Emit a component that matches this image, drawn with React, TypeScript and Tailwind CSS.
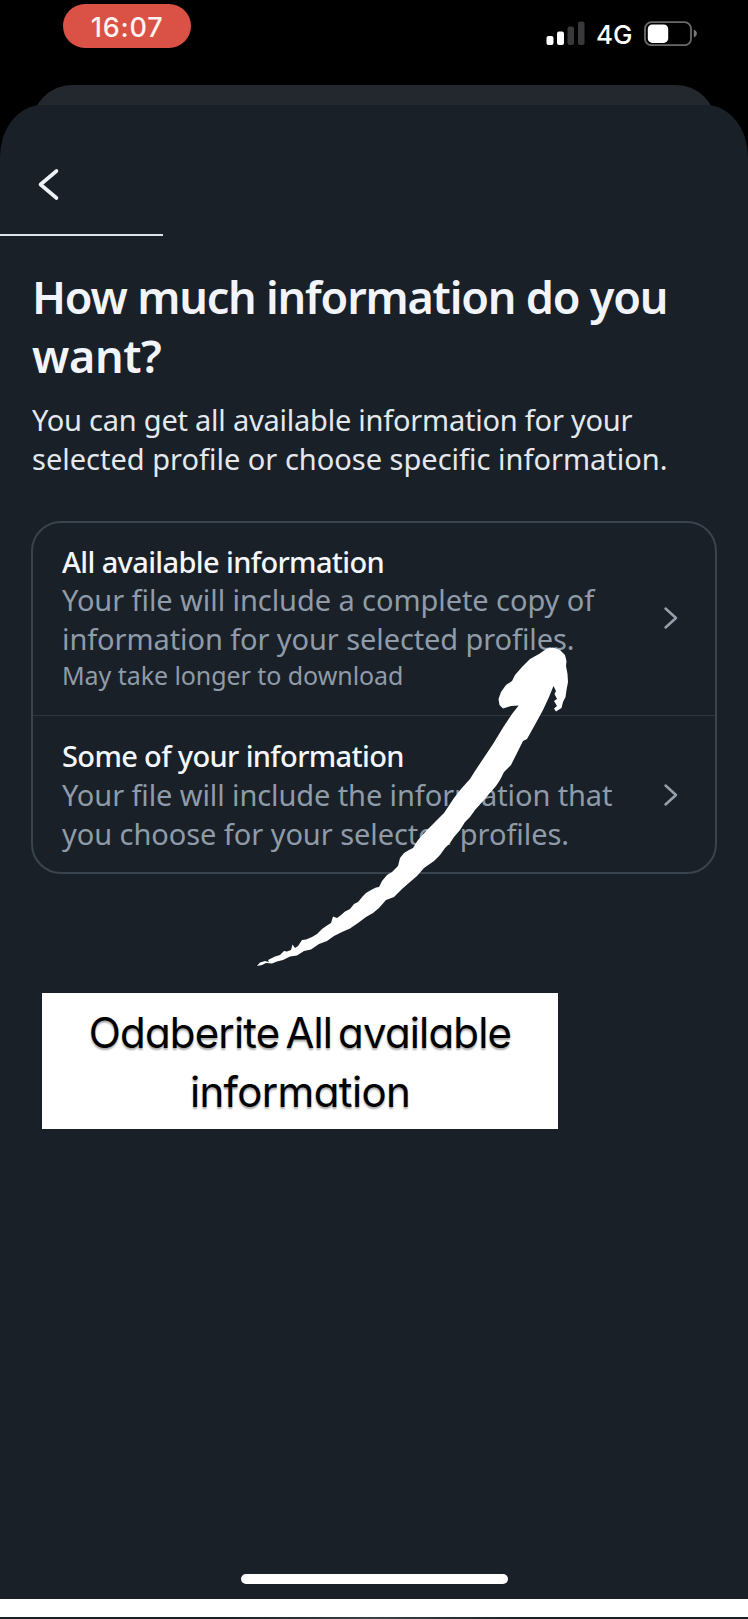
import type { ReactNode } from "react";

function StatusBar() {
  return (
    <header className="flex h-[85px] items-start justify-between bg-black pl-[63px] pr-[50px]">
      <div className="mt-[4px] h-[44px] w-[128px] rounded-full bg-[#d95245] pt-[2px] text-center font-['Inter',sans-serif] text-[27px] font-medium leading-[44px] tracking-[0.8px] text-[#fdf3f1]">
        16:07
      </div>
      <div className="mt-[21px] flex h-[25px] items-center">
        <svg width="39" height="25" viewBox="0 0 39 25">
          <rect x="0.5" y="15" width="7" height="9" rx="2" fill="#fff" />
          <rect x="11" y="10.5" width="7" height="13.5" rx="2" fill="#fff" />
          <rect x="21.5" y="5.5" width="6.5" height="18.5" rx="2" fill="#39383b" />
          <rect x="32" y="0.5" width="6.5" height="23.5" rx="2" fill="#39383b" />
        </svg>
        <span className="ml-[11px] mt-[2px] w-[48px] font-['Inter',sans-serif] text-[26px] font-medium leading-[25px] text-white">
          4G
        </span>
        <svg width="54" height="25" viewBox="0 0 54 25">
          <rect x="1" y="1.2" width="46" height="23" rx="6.5" fill="none" stroke="#6b696c" strokeWidth="1.8" />
          <rect x="3.8" y="3.5" width="20.4" height="18.4" rx="4.5" fill="#fff" />
          <path d="M49.800 8.500c2 .8 3 2.300 3 4s-1 3.200-3 4z" fill="#7a787b" />
        </svg>
      </div>
    </header>
  );
}

function Chevron() {
  return (
    <svg width="16" height="24" viewBox="0 0 16 24" className="mr-[36px] shrink-0">
      <path d="M2.500 2.500 L13 12 L2.500 21.500" fill="none" stroke="#95a0ab" strokeWidth="2.500" strokeLinecap="round" strokeLinejoin="round" />
    </svg>
  );
}

function Option({ title, children, className }: { title: ReactNode; children: ReactNode; className: string }) {
  return (
    <div className={`flex items-center justify-between pl-[29px] ${className}`}>
      <div className="whitespace-nowrap text-[29px] leading-[39px] text-[#8f9ba8]">
        <h2 className="text-[29px] font-medium leading-[38px] tracking-[-0.640px] text-[#f3f6fa]">{title}</h2>
        {children}
      </div>
      <Chevron />
    </div>
  );
}

function Arrow() {
  return (
    <svg width="330" height="330" viewBox="250 642 330 330" className="pointer-events-none absolute left-[250px] top-[642px]">
      <path
        fill="#fff"
        d="M257 966 L260 962.500 L265 961 L269 962 L268 960 L275 956.500 L280 955 L284 951 L287 951.500 L291 950 L292.500 944.500 L295 948 L298 946 L302 940 L306 939.500 L312 937 L317 934 L322 929 L327 925.500 L331 923 L333 916.500 L337 918 L341 915 L345 911.500 L350 909 L354 904 L358 902 L363 896 L366 893 L371 890 L376 887.500 L379 887 L382 881 L387 875 L392 872 L398 866 L400 858 L404 853 L409 850 L413 848 L418 840 L427 830 L436 821 L444 813 L446 810 L454 798 L461 789 L470 779 L475 771 L481 762 L493 744 L504 726 L512 714 L518.700 705.500 L511 706 L503 708.500 L499.500 705 L498.500 699 L501 692 L506 685 L512 681 L515 675 L522 667 L530 659 L539 654 L547 648.500 L553 647.500 L560 650 L565 655 L566.500 661 L566 666 L567.500 674 L568 682 L566.500 690 L565.500 697 L563 702 L561.500 708 L556 711.500 L554 708.500 L557 706 L554 701 L557 699 L554.500 694 L556 691 L553.500 686 L549 697 L543 710 L537 721 L532 730 L527 739 L523 741 L519 749 L511 765 L504 772 L500 780 L496 786 L489 794 L483 801 L475 810 L470 817 L465 822 L460 830 L454 837 L450 843 L445 848 L440 855 L434 861 L424 868 L417 876 L410 882 L402 889 L394 897 L386 900 L379 908 L373 913 L366 917 L358 923 L350 928.500 L342 932 L334 936 L327 941 L319 944 L311 949.500 L304 951 L297 955.500 L290 956.500 L283 960 L277 961.500 L272 963.500 L266 963 L262 965 Z"
      />
    </svg>
  );
}

export default function App() {
  return (
    <div className="relative flex h-[1619px] w-[748px] flex-col overflow-hidden bg-black font-['Noto_Sans',sans-serif]">
      <StatusBar />
      <div className="mx-[32px] -mb-[40px] h-[60px] shrink-0 rounded-t-[40px] bg-[#23282f]" />
      <main className="flex h-[1494px] shrink-0 flex-col rounded-t-[42px_52px] bg-[#1a2028]">
        <div className="flex h-[131px] flex-col justify-end">
          <svg width="28" height="36" viewBox="0 0 28 36" className="mb-[32px] ml-[35px]">
            <path d="M21.500 5 L5.500 18.500 L21.500 32" fill="none" stroke="#eef1f5" strokeWidth="3.600" strokeLinecap="round" strokeLinejoin="round" />
          </svg>
          <div className="h-[2px] w-[163px] bg-[#dfe2e7]" />
        </div>
        <div className="whitespace-nowrap px-[32px] pt-[31px]">
          <h1 className="text-[45px] font-[560] leading-[59px] tracking-[-1.200px] text-[#f1f4f9]">
            How much information do you
            <br />
            <span className="tracking-[-0.400px]">want?</span>
          </h1>
          <p className="mt-[15px] text-[29px] leading-[39px] text-[#e4e8ee]">
            <span className="tracking-[-0.230px]">You can get all available information for your</span>
            <br />
            selected profile or choose specific information.
          </p>
          <section className="-ml-px mt-[43px] w-[686px] rounded-[30px] border-2 border-[#39444e]">
            <Option title="All available information" className="h-[193px] border-b border-[#2c363f] pb-[3px]">
              <p className="-mt-px tracking-[-0.070px]">Your file will include a complete copy of</p>
              <p className="tracking-[-0.090px]">information for your selected profiles.</p>
              <p className="text-[25px] leading-[35px] tracking-[-0.060px]">May take longer to download</p>
            </Option>
            <Option title="Some of your information" className="h-[156px] pt-px">
              <p className="tracking-[-0.100px]">Your file will include the information that</p>
              <p className="tracking-[-0.060px]">you choose for your selected profiles.</p>
            </Option>
          </section>
        </div>
        <div className="ml-[42px] mt-[119px] h-[136px] w-[516px] bg-white pt-[10px] text-center font-['Inter',sans-serif] text-[42px] leading-[59px] text-black [font-feature-settings:'cv11'] [text-shadow:0_2px_2px_rgba(0,0,0,0.35)]">
          <p className="tracking-[-0.850px] [word-spacing:-5px]">Odaberite All available</p>
          <p className="tracking-[-0.650px]">information</p>
        </div>
        <div className="mx-auto mb-[15px] mt-auto h-[10px] w-[267px] rounded-full bg-white" />
      </main>
      <div className="h-[18px] shrink-0 bg-white" />
      <div className="h-[2px] shrink-0 bg-linear-to-r from-[#1b2129] from-30% via-[#3a4148] to-[#1b2129] to-70%" />
      <Arrow />
    </div>
  );
}
